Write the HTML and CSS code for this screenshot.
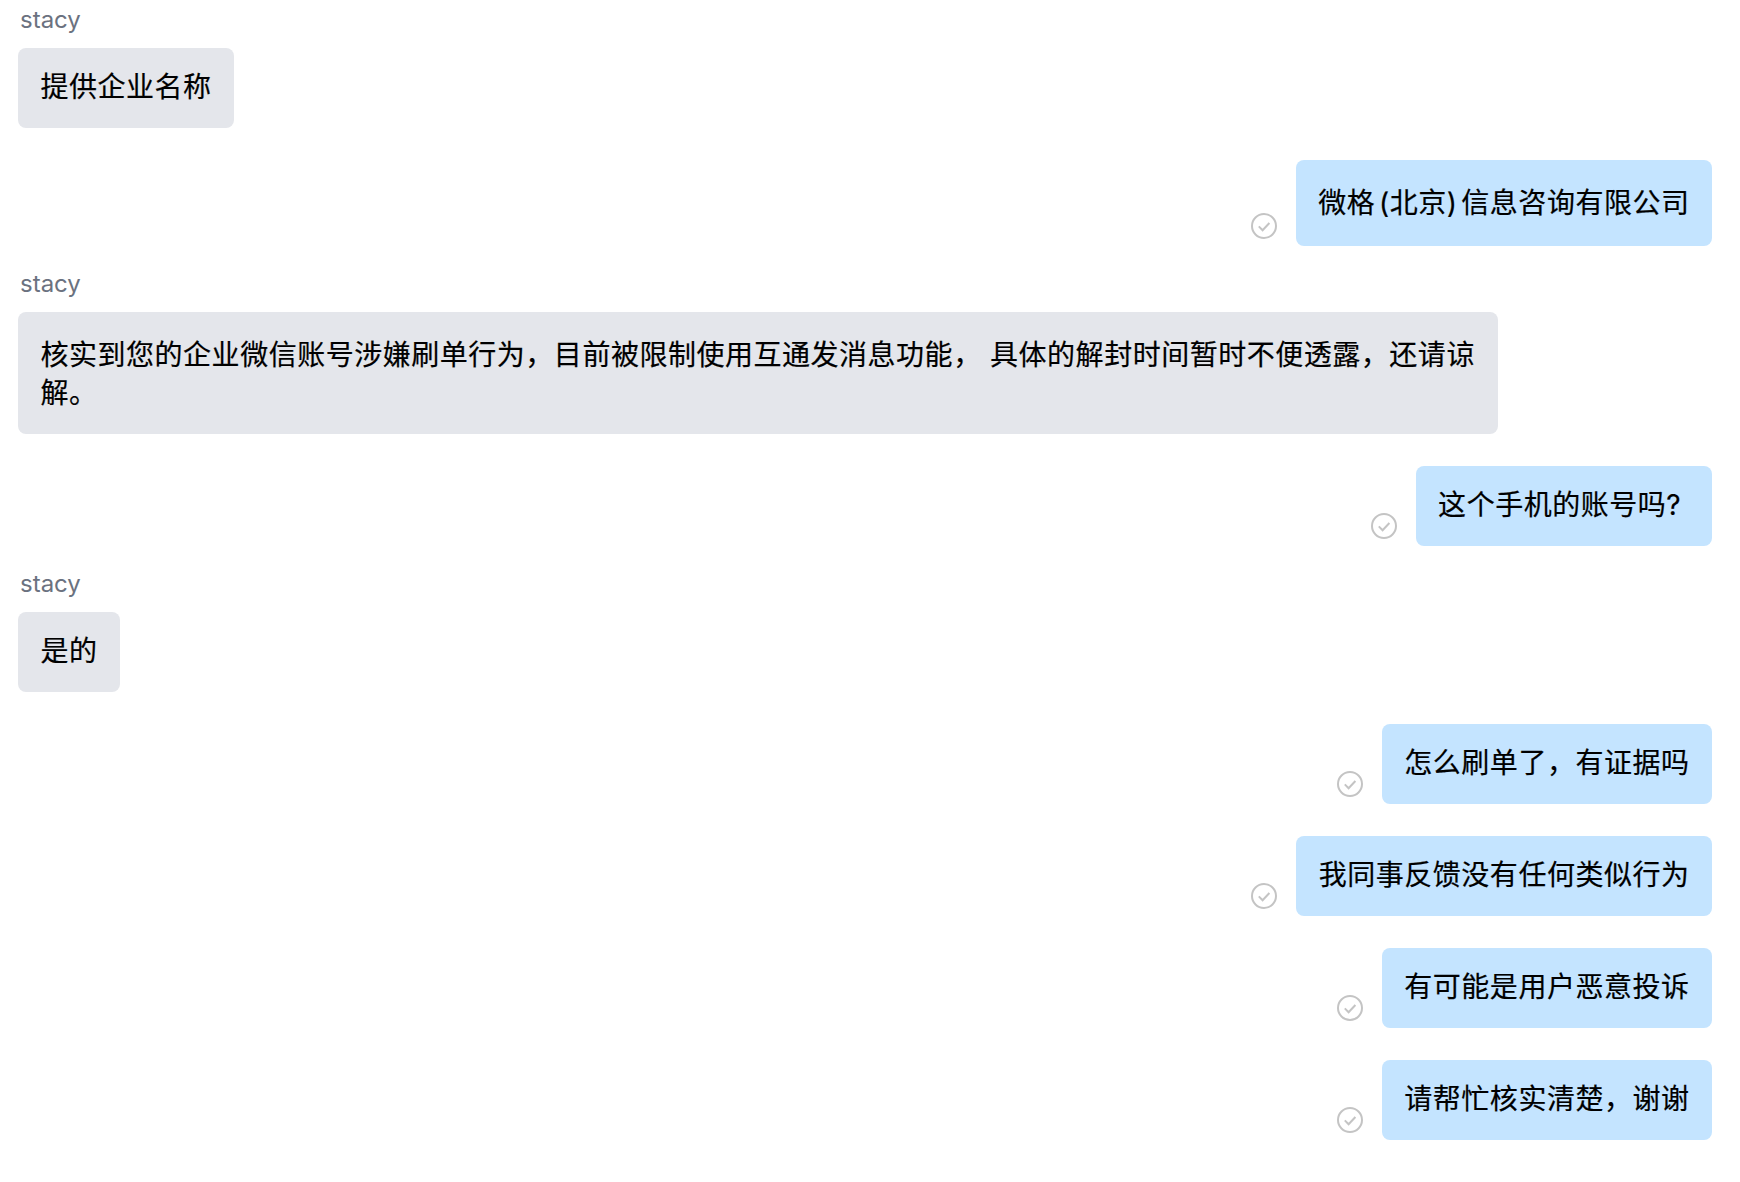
FILE: index.html
```html
<!DOCTYPE html>
<html lang="zh-CN">
<head>
    <meta charset="UTF-8">
    <meta name="viewport" content="width=device-width, initial-scale=1.0">
    <title>消息</title>
    <link rel="stylesheet" href="styles.css">
</head>
<body>
    <svg class="defs" width="0" height="0" aria-hidden="true">
        <symbol id="check" viewBox="0 0 26 26">
            <circle cx="13" cy="13" r="12" fill="none" stroke="#c4c4c4" stroke-width="2"/>
            <path d="M7.8 13.4l3.8 3.8 6.8-7.2" fill="none" stroke="#c4c4c4" stroke-width="2"/>
        </symbol>
    </svg>
    <div class="chat">
        <div class="msg">
            <div class="name">stacy</div>
            <div class="bubble">提供企业名称</div>
        </div>
        <div class="msg mine">
            <svg class="tick"><use href="#check"/></svg>
            <div class="bubble tall">微格 (北京) 信息咨询有限公司</div>
        </div>
        <div class="msg">
            <div class="name">stacy</div>
            <div class="bubble long">核实到您的企业微信账号涉嫌刷单行为，目前被限制使用互通发消息功能， 具体的解封时间暂时不便透露，还请谅解。</div>
        </div>
        <div class="msg mine">
            <svg class="tick"><use href="#check"/></svg>
            <div class="bubble">这个手机的账号吗?&nbsp;</div>
        </div>
        <div class="msg">
            <div class="name">stacy</div>
            <div class="bubble">是的</div>
        </div>
        <div class="msg mine">
            <svg class="tick"><use href="#check"/></svg>
            <div class="bubble">怎么刷单了，有证据吗</div>
        </div>
        <div class="msg mine">
            <svg class="tick"><use href="#check"/></svg>
            <div class="bubble">我同事反馈没有任何类似行为</div>
        </div>
        <div class="msg mine">
            <svg class="tick"><use href="#check"/></svg>
            <div class="bubble">有可能是用户恶意投诉</div>
        </div>
        <div class="msg mine">
            <svg class="tick"><use href="#check"/></svg>
            <div class="bubble">请帮忙核实清楚，谢谢</div>
        </div>
    </div>
</body>
</html>
```

FILE: styles.css
```css
body {
    margin: 0;
    background-color: #fff;
    font-family: Inter, "Noto Sans CJK SC", sans-serif;
    color: #000;
}

.defs {
    display: block;
}

.chat {
    display: flex;
    flex-direction: column;
    gap: 32px;
    padding: 14px 28px 42px 18px;
}

.msg {
    display: flex;
    flex-direction: column;
    align-items: flex-start;
    max-width: 1480px;
}

/* sits up into the gap above the message */
.name {
    margin: -8px 0 14px 2px;
    font-size: 24px;
    line-height: 28px;
    color: #6b7280;
}

.bubble {
    padding: 20px 22.5px 22px;
    border-radius: 8px;
    background-color: #e4e6eb;
    font-size: 28px;
    line-height: 38px;
    letter-spacing: 0.52px;
    -webkit-text-stroke: 0.2px #000;
}

.bubble.long {
    padding: 24px 22.5px 22px;
}

.bubble.tall {
    padding: 23px 22.5px;
    line-height: 40px;
    word-spacing: -4.6px;
}

.mine {
    flex-direction: row;
    align-items: flex-end;
    justify-content: flex-end;
    gap: 19px;
    max-width: none;
}

.mine .bubble {
    background-color: #c4e4ff;
}

.tick {
    width: 26px;
    height: 26px;
    margin-bottom: 7px;
}
```
